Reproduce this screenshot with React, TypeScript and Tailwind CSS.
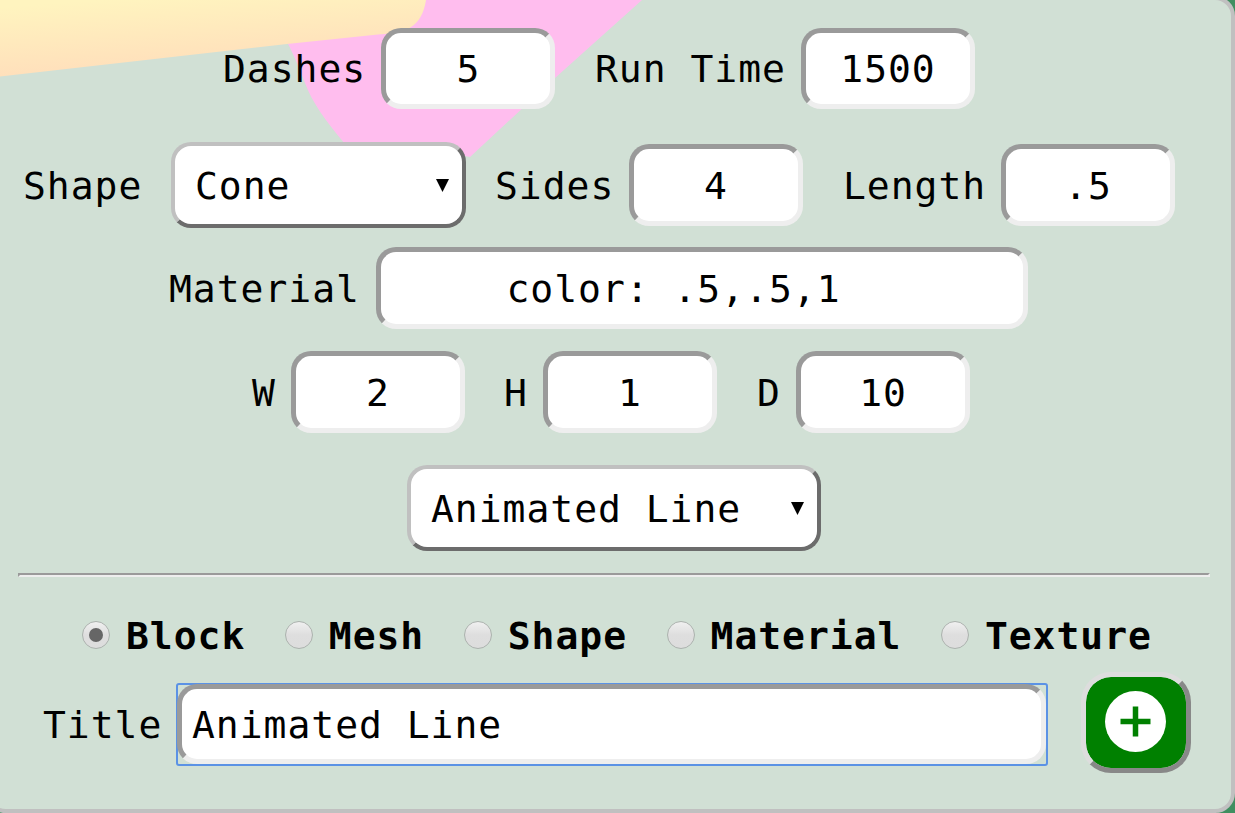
import React, { useState } from "react";

function Label({ text, className }: { text: string; className: string }) {
  return <label className={`shrink-0 pt-px whitespace-pre ${className}`}>{text}</label>;
}

function Field({ value, className = "h-[82px] w-[174px] text-center" }: { value: string; className?: string }) {
  return (
    <input
      type="text"
      defaultValue={value}
      className={`shrink-0 rounded-[20px] border-5 border-t-[#9a9a9a] border-r-[#eeeeee] border-b-[#eeeeee] border-l-[#9a9a9a] bg-white pt-px outline-none ${className}`}
    />
  );
}

function Picker({ options, className }: { options: string[]; className: string }) {
  return (
    <div className={`relative h-[86px] shrink-0 ${className}`}>
      <select className="h-full w-full appearance-none rounded-[20px] border-4 border-t-[#c0c0c0] border-r-[#6c6c6c] border-b-[#6c6c6c] border-l-[#c0c0c0] bg-white pt-px pl-5 outline-none">
        {options.map((o) => (
          <option key={o}>{o}</option>
        ))}
      </select>
      <svg className="pointer-events-none absolute top-[37px] right-[17px] h-[13px] w-[13px]" viewBox="0 0 13 13">
        <path d="M0 0H13L6.5 13Z" fill="black" />
      </svg>
    </div>
  );
}

function Radio({ name, checked, onSelect }: { name: string; checked: boolean; onSelect: () => void }) {
  return (
    <button type="button" role="radio" aria-checked={checked} onClick={onSelect} className="flex shrink-0 items-center gap-4">
      <span className="-mt-0.5 flex h-7 w-7 items-center justify-center rounded-full border border-[#acb2ae] bg-linear-to-b from-[#f0f0f0] via-[#dedede] to-[#dddddd]">
        {checked && <span className="h-3.5 w-3.5 rounded-full bg-[#666666]" />}
      </span>
      <span className="font-bold whitespace-pre">{name}</span>
    </button>
  );
}

function Backdrop() {
  return (
    <svg className="absolute top-0 left-[6px] h-[160px] w-[650px]" viewBox="0 0 650 160">
      <defs>
        <linearGradient id="sand" gradientUnits="userSpaceOnUse" x1="100" y1="0" x2="105" y2="72">
          <stop offset="0" stopColor="#fff4bf" />
          <stop offset="1" stopColor="#ffdfbb" />
        </linearGradient>
      </defs>
      <path d="M280 0H642L555 78L470 157L460 155L345 144C325 120 312 102 305 83C300 70 295 57 287 42Z" fill="#ffbdee" />
      <path d="M0 0H426C424 13 419 22 411 27C404 32 396 33 378 34.5L287 44L0 76.5Z" fill="url(#sand)" />
    </svg>
  );
}

export default function App() {
  const kinds = ["Block", "Mesh", "Shape", "Material", "Texture"];
  const [kind, setKind] = useState("Block");
  return (
    <div className="h-[813px] w-[1235px] overflow-hidden bg-[#3f8f60] font-['DejaVu_Sans_Mono',monospace] text-[38px] leading-[46px] tracking-[0.98px] text-black">
      <div className="-mt-1 -ml-[14px] h-[817px] w-[1249px] rounded-[20px] border-4 border-[#c0c0c0] bg-[#d1e0d5]">
        <div className="relative flex h-full w-full flex-col pl-[7px]">
          <div className="absolute top-0 left-1">
            <Backdrop />
          </div>
          <div className="relative mt-[28px] flex h-[81px] items-center pl-[226px]">
            <Label text="Dashes" className="w-[158px]" />
            <Field value="5" className="h-[81px] w-[174px] pl-px text-center" />
            <Label text="Run Time" className="ml-[40px] w-[206px]" />
            <Field value="1500" className="h-[81px] w-[174px] text-center" />
          </div>
          <div className="relative mt-[33px] flex h-[86px] items-center pl-[26px]">
            <Label text="Shape" className="w-[148px]" />
            <Picker options={["Cone", "Cylinder", "Sphere"]} className="w-[295px]" />
            <Label text="Sides" className="ml-[29px] w-[134px]" />
            <Field value="4" />
            <Label text="Length" className="ml-[40px] w-[158px]" />
            <Field value=".5" />
          </div>
          <div className="relative mt-[19px] flex h-[82px] items-center pl-[172px]">
            <Label text="Material" className="w-[207px]" />
            <Field value="color: .5,.5,1" className="h-[82px] w-[652px] pr-[57px] text-center" />
          </div>
          <div className="relative mt-[22px] flex h-[82px] items-center pl-[255px]">
            <Label text="W" className="w-[39px]" />
            <Field value="2" />
            <Label text="H" className="ml-[39px] w-[39px]" />
            <Field value="1" />
            <Label text="D" className="ml-[40px] w-[39px]" />
            <Field value="10" />
          </div>
          <div className="relative mt-[32px] flex pl-[410px]">
            <Picker options={["Animated Line", "Line"]} className="w-[414px]" />
          </div>
          <div className="relative mt-[22px] mr-[21px] ml-[21px] h-1 shrink-0 border-2 border-t-[#9a9a9a] border-r-[#eeeeee] border-b-[#eeeeee] border-l-[#9a9a9a]" />
          <div role="radiogroup" className="relative mt-[35px] flex h-[48px] items-center gap-[39.5px] pl-[85px]">
            {kinds.map((k) => (
              <Radio key={k} name={k} checked={k === kind} onSelect={() => setKind(k)} />
            ))}
          </div>
          <div className="relative mt-[12px] flex h-[101px] items-center pl-[46px]">
            <Label text="Title" className="mt-[3px] w-[133px]" />
            <div className="mt-1 h-[83px] w-[872px] shrink-0 rounded-[3px] border-2 border-[#5b92e5]">
              <Field value="Animated Line" className="-mt-px -ml-px h-[80px] w-[869px] pt-0.5 pl-[10px]" />
            </div>
            <button
              type="button"
              aria-label="Add"
              className="ml-[33px] flex h-[101px] w-[110px] shrink-0 items-center justify-center rounded-[30px] border-5 border-t-[#dddddd] border-r-[#888888] border-b-[#888888] border-l-[#dddddd] bg-[#008000] bg-clip-padding"
            >
              <svg className="-mt-[3px] -ml-px h-[61px] w-[61px]" viewBox="0 0 61 61">
                <circle cx="30.5" cy="30.5" r="30.5" fill="white" />
                <path d="M15.5 30.5H45.5M30.5 15.5V45.5" stroke="#008000" strokeWidth="5.5" />
              </svg>
            </button>
          </div>
        </div>
      </div>
    </div>
  );
}
